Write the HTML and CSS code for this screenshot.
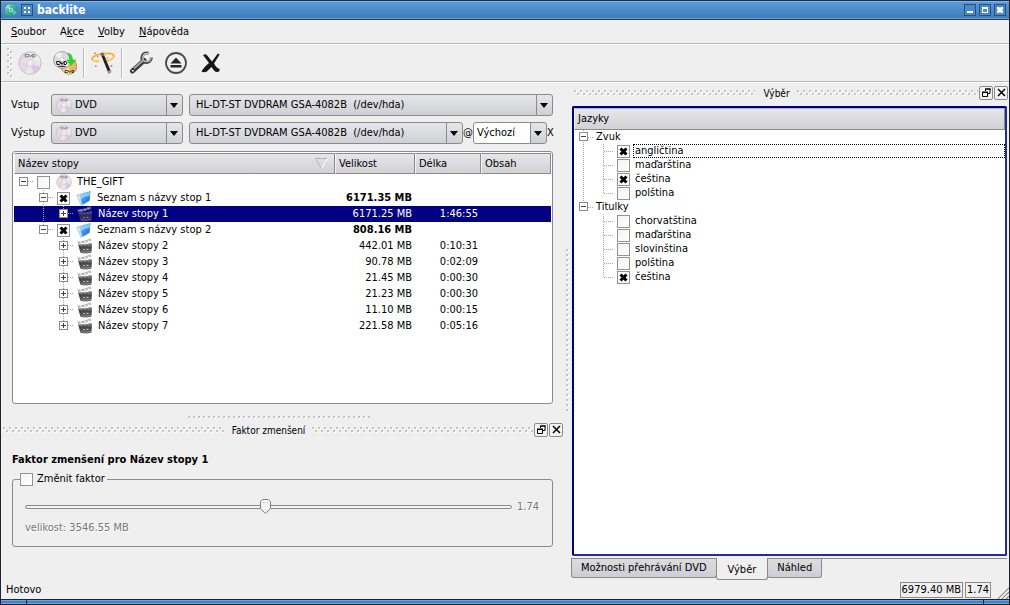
FILE: index.html
```html
<!DOCTYPE html>
<html lang="cs">
<head>
<meta charset="utf-8">
<title>backlite</title>
<link rel="stylesheet" href="styles.css">
</head>
<body>
<svg class="sprite" aria-hidden="true">
  <defs>
    <linearGradient id="g-disc" x1="0" y1="0" x2="1" y2="1">
      <stop offset="0" stop-color="#d2d2d6"/><stop offset=".35" stop-color="#e9e2ea"/>
      <stop offset=".5" stop-color="#ded6e2"/><stop offset=".7" stop-color="#ece6ee"/><stop offset="1" stop-color="#cfc6d4"/>
    </linearGradient>
    <linearGradient id="g-folder" x1="0" y1="0" x2="1" y2="1">
      <stop offset="0" stop-color="#9ed4ff"/><stop offset=".5" stop-color="#3f9bf0"/><stop offset="1" stop-color="#0f56c0"/>
    </linearGradient>
    <linearGradient id="g-clap" x1="0" y1="0" x2="0" y2="1">
      <stop offset="0" stop-color="#8a8a8a"/><stop offset=".4" stop-color="#444"/><stop offset="1" stop-color="#666"/>
    </linearGradient>
    <linearGradient id="g-app" x1="0" y1="0" x2="1" y2="1">
      <stop offset="0" stop-color="#7fd6c4"/><stop offset=".5" stop-color="#3fae9f"/><stop offset="1" stop-color="#1c8688"/>
    </linearGradient>
  </defs>
  <symbol id="i-disc" viewBox="0 0 24 24">
    <circle cx="12" cy="12" r="11.2" fill="url(#g-disc)" stroke="#bdb8c2" stroke-width=".8"/>
    <path d="M12 12 1.500 10A11 11 0 0 0 4 19Z" fill="#efcfe4" opacity=".6"/>
    <path d="M12 12 22 16A11 11 0 0 1 16 22Z" fill="#d0b8dd" opacity=".6"/>
    <path d="M12 12 22.500 9A11 11 0 0 0 19 4Z" fill="#fff" opacity=".45"/>
    <path d="M12 12 7 21.500A11 11 0 0 0 12 23Z" fill="#f3f0d0" opacity=".5"/>
    <circle cx="12" cy="12" r="3.400" fill="#f4f2f4" stroke="#c8c2ca" stroke-width=".7"/>
    <circle cx="12" cy="12" r="1.400" fill="#fff" stroke="#d5d0d5" stroke-width=".5"/>
    <path d="M7 3.500h3.200q1.800 1 0 2.500H7.500zM11 3.500l1.500 2.500 1.500-2.500M14.500 3.500h2q1.500 1 0 2.500h-2z" fill="none" stroke="#77747c" stroke-width=".9"/>
  </symbol>
  <symbol id="i-copy" viewBox="0 0 24 24">
    <circle cx="16" cy="15.500" r="7.800" fill="#e8b768" stroke="#8b6a33" stroke-width=".6"/>
    <path d="M16 15.500 9.500 19a8 8 0 0 0 8.500 4z" fill="#f4d498"/>
    <path d="M12 19.500h2.500q1.500 1 0 2H12zM15.500 19.500l1.200 2 1.200-2M19 19.500h1.500q1 1 0 2H19z" fill="none" stroke="#222" stroke-width=".8"/>
    <circle cx="9" cy="9" r="8.400" fill="#dcdcde" stroke="#777" stroke-width=".6"/>
    <path d="M9 9 2.500 4.500A8 8 0 0 1 7.500 1z" fill="#f2f2f2"/><path d="M9 9 16.800 11a8 8 0 0 1-5 5.800z" fill="#f0f0f0"/>
    <circle cx="9" cy="8.500" r="2" fill="#fff" stroke="#aaa" stroke-width=".5"/>
    <path d="M3.500 10.500h3q2 1.500 0 3H4zM7.500 10.500l1.500 3 2-3M11.500 10.500h1.500q2 1.500 0 3h-2z" fill="none" stroke="#111" stroke-width="1"/>
    <ellipse cx="9" cy="15.300" rx="4.500" ry=".6" fill="#222"/>
    <path d="M14.500 2q5 .5 5 7H23l-5 5.500L13.500 9h3q0-4-2-7z" fill="#24d824" stroke="#2fb53a" stroke-width=".4"/>
  </symbol>
  <symbol id="i-wand" viewBox="0 0 24 24">
    <path d="M8 10.500Q1.500 10 1 8 1 5 10 3.200 21.500 1 22.800 4.500 23.500 8 13 10.800" fill="none" stroke="#f6ab35" stroke-width="1.800"/>
    <path d="M2 9.200q3 1.800 8 1.500M14 10.500q8-2 8.500-5" fill="none" stroke="#ffe06a" stroke-width=".9"/>
    <path d="m9.500 2.500 2.500-1 8 19-2.500 2z" fill="#27211f"/>
    <path d="m9.500 2.500 2.500-1 1.300 3-2.500 1z" fill="#77706a"/>
    <path d="m16.700 20 1.300 3 2.500-2-.8-2z" fill="#999"/>
    <path d="M3 1.500h1.600v1.600H3zM19.500 14h1.800v1.800h-1.800zM4 14.500h1.500V16H4z" fill="#f46a3a"/>
    <path d="M6 5h1.500v1.500H6zM15.500 6H17v1.500h-1.500z" fill="#f09c3a"/>
  </symbol>
  <symbol id="i-wrench" viewBox="0 0 24 24" fill="none">
    <path d="M3.500 20 15 9.500" stroke="#3a3a3a" stroke-width="5" stroke-linecap="round"/>
    <path d="M19.500 2.200Q14 1.500 13 6q-.5 4.500 3 5.300 5.500.7 6.500-4.800" stroke="#4a4a4a" stroke-width="3"/>
    <path d="M19 2.500q-4.500-.2-5.200 3.700-.2 3.500 2.500 4.200 4.500.5 5.700-3.700" stroke="#c6c6c6" stroke-width="1.300"/>
    <path d="M5 17.500 14.500 9" stroke="#a8a8a8" stroke-width="1.800"/>
    <circle cx="3.800" cy="19.700" r="1.500" fill="#eee" stroke="#1a1a1a" stroke-width=".9"/>
  </symbol>
  <symbol id="i-eject" viewBox="0 0 24 24">
    <circle cx="12" cy="12" r="10" fill="#f0f0f0" stroke="#4a4a4a" stroke-width="1.800"/>
    <path d="m12 6.500 5.500 6H6.500z" fill="#262626"/><path d="M6.500 14h11v2.500h-11z" fill="#262626"/>
  </symbol>
  <symbol id="i-quit" viewBox="0 0 24 24">
    <path d="M4 4q3-1.500 4 .3l5 6.200L18.500 3q1.500-.8 2 .8L15 12.500q2.500 4.500 5.500 5.500 1 3.500-4 2.800-2-1.500-4-4.800-3 3-5 4.800-3 1-5-.3 2-4 7.500-8.500z" fill="#161616"/>
  </symbol>
  <symbol id="i-folder" viewBox="0 0 16 16">
    <path d="M.5 5 9 2.500l1-.8.8 1.500L13 11 5 15.500z" fill="#d8e6f3" stroke="#a9c2d8" stroke-width=".6"/>
    <path d="M2 5.500 14.500 1l-.8 9.500L5.200 15.500z" fill="url(#g-folder)"/>
    <path d="m3 6 11-4.200-.4 4.200Q8 6 4 10z" fill="#bfe4ff" opacity=".6"/>
    <path d="m2 5.500 3.200 10 1.300-.8L3.200 5z" fill="#fff" opacity=".7"/>
  </symbol>
  <symbol id="i-clap" viewBox="0 0 16 16">
    <path d="M.5 3.500Q6 3.500 13.500.3l.7 2.500Q7 5.500 1 6z" fill="#b4b4b4"/>
    <path d="m3 3.600 2 2M7 2.800l2 2M10.500 1.600l2 2" stroke="#eee" stroke-width="1.200"/>
    <path d="M1 6.500Q9 6.500 15 5l-.5 9.500Q9 16 3.500 15z" fill="url(#g-clap)"/>
    <path d="m3 6.400 2 2M6.500 6.200l2 2M10 5.900l2 2M13 5.400l1.500 1.500" stroke="#999" stroke-width="1"/>
    <path d="M6 11.500h2M9.500 11.300h2" stroke="#bbb" stroke-width="1.200"/>
    <path d="M4 14q5 .5 10-.8" stroke="#888" fill="none"/>
  </symbol>
  <symbol id="i-float" viewBox="0 0 9 9">
    <path d="M3.500 3V1H8v4.500H6" fill="none" stroke="#000" stroke-width="1"/><path d="M3 .5h6v1H3zM0 3.500h6v1.500H0z"/>
    <path d="M.5 4v4.500h5V4" fill="none" stroke="#000"/>
  </symbol>
  <symbol id="i-close" viewBox="0 0 9 9">
    <path d="m1 1 7 7M8 1 1 8" stroke="#000" stroke-width="1.500"/>
  </symbol>
</svg>

<div class="window">
  <header class="titlebar">
    <svg class="app-icon" viewBox="0 0 14 14" aria-hidden="true">
      <circle cx="7" cy="7" r="6.600" fill="url(#g-app)" stroke="#2b8f90" stroke-width=".5"/>
      <path d="M7 7 1.500 4.500A6 6 0 0 1 5 1.500z" fill="#b5eadd" opacity=".7"/><path d="m7 7 5.800 1.500A6 6 0 0 1 10 12.500z" fill="#86d8c4" opacity=".6"/>
      <circle cx="7" cy="7" r="2" fill="#c5f0e6"/><circle cx="7" cy="7" r=".9" fill="#2a8f94"/>
    </svg>
    <button class="title-button" aria-label="Na všech plochách"><svg viewBox="0 0 8 8"><path d="M1 1h2v2H1zM5 1h2v2H5zM1 5h2v2H1zM5 5h2v2H5z" fill="#fff"/></svg></button>
    <h1 class="title">backlite</h1>
    <button class="title-button" aria-label="Minimalizovat"><svg viewBox="0 0 8 8"><path d="M1 5h6v2H1z" fill="#fff"/></svg></button>
    <button class="title-button" aria-label="Maximalizovat"><svg viewBox="0 0 8 8"><path d="M1 1h6v6H1zM2 3v3h4V3z" fill="#fff" fill-rule="evenodd"/></svg></button>
    <button class="title-button" aria-label="Zavřít"><svg viewBox="0 0 8 8"><path d="M1 1h2l1 1 1-1h2v2L6 4l1 1v2H5L4 6 3 7H1V5l1-1-1-1z" fill="#fff"/></svg></button>
  </header>

  <nav class="menubar">
    <button><u>S</u>oubor</button><button>A<u>k</u>ce</button><button><u>V</u>olby</button><button><u>N</u>ápověda</button>
  </nav>

  <div class="toolbar">
    <span class="grip-vertical"></span>
    <button aria-label="Otevřít DVD"><svg><use href="#i-disc"/></svg></button>
    <button aria-label="Kopírovat DVD"><svg><use href="#i-copy"/></svg></button>
    <span class="separator"></span>
    <button aria-label="Průvodce"><svg><use href="#i-wand"/></svg></button>
    <span class="separator"></span>
    <button aria-label="Nastavení"><svg><use href="#i-wrench"/></svg></button>
    <button aria-label="Vysunout"><svg><use href="#i-eject"/></svg></button>
    <button aria-label="Ukončit"><svg><use href="#i-quit"/></svg></button>
  </div>

  <main class="body">
    <section class="left">
      <div class="central">
        <div class="devices">
          <label for="in-type">Vstup</label>
          <div class="combo"><select id="in-type" class="with-icon"><option>DVD</option></select><svg class="combo-icon"><use href="#i-disc"/></svg></div>
          <div class="combo-row">
            <div class="combo grow"><select aria-label="Vstupní zařízení"><option>HL-DT-ST DVDRAM GSA-4082B&nbsp; (/dev/hda)</option></select></div>
          </div>
          <label for="out-type">Výstup</label>
          <div class="combo"><select id="out-type" class="with-icon"><option>DVD</option></select><svg class="combo-icon"><use href="#i-disc"/></svg></div>
          <div class="combo-row">
            <div class="combo grow"><select aria-label="Výstupní zařízení"><option>HL-DT-ST DVDRAM GSA-4082B&nbsp; (/dev/hda)</option></select></div>
            <label class="affix" for="speed">@</label>
            <div class="combo speed"><select id="speed" class="editable"><option>Výchozí</option></select></div>
            <span class="affix small">X</span>
          </div>
        </div>

        <div class="tree-frame">
          <table class="tracks">
            <colgroup><col><col class="col-size"><col class="col-length"><col class="col-content"></colgroup>
            <thead><tr>
              <th><div class="sorted">Název stopy<svg viewBox="0 0 13 11"><path d="M.5.5h12" stroke="#b4b4b8"/><path d="m.5.500 6 10" stroke="#b4b4b8"/><path d="m6.500 10.500 6-10" stroke="#fff"/></svg></div></th>
              <th>Velikost</th><th>Délka</th><th>Obsah</th>
            </tr></thead>
            <tbody>
              <tr><td><div class="node"><span class="guide arm"><button class="toggle open" aria-label="Sbalit"></button></span><label><input type="checkbox"><svg class="item-icon"><use href="#i-disc"/></svg>THE_GIFT</label></div></td><td></td><td></td><td></td></tr>
              <tr><td><div class="node"><span class="guide"></span><span class="guide tee"><button class="toggle open" aria-label="Sbalit"></button></span><label><input type="checkbox" checked><svg class="item-icon"><use href="#i-folder"/></svg>Seznam s názvy stop 1</label></div></td><td class="strong">6171.35 MB</td><td></td><td></td></tr>
              <tr class="selected"><td><div class="node"><span class="guide"></span><span class="guide pass"></span><span class="guide corner"><button class="toggle" aria-label="Rozbalit"></button></span><span class="item"><svg class="item-icon"><use href="#i-clap"/></svg>Název stopy 1</span></div></td><td>6171.25 MB</td><td>1:46:55</td><td></td></tr>
              <tr><td><div class="node"><span class="guide"></span><span class="guide corner"><button class="toggle open" aria-label="Sbalit"></button></span><label><input type="checkbox" checked><svg class="item-icon"><use href="#i-folder"/></svg>Seznam s názvy stop 2</label></div></td><td class="strong">808.16 MB</td><td></td><td></td></tr>
              <tr><td><div class="node"><span class="guide"></span><span class="guide"></span><span class="guide tee"><button class="toggle" aria-label="Rozbalit"></button></span><span class="item"><svg class="item-icon"><use href="#i-clap"/></svg>Název stopy 2</span></div></td><td>442.01 MB</td><td>0:10:31</td><td></td></tr>
              <tr><td><div class="node"><span class="guide"></span><span class="guide"></span><span class="guide tee"><button class="toggle" aria-label="Rozbalit"></button></span><span class="item"><svg class="item-icon"><use href="#i-clap"/></svg>Název stopy 3</span></div></td><td>90.78 MB</td><td>0:02:09</td><td></td></tr>
              <tr><td><div class="node"><span class="guide"></span><span class="guide"></span><span class="guide tee"><button class="toggle" aria-label="Rozbalit"></button></span><span class="item"><svg class="item-icon"><use href="#i-clap"/></svg>Název stopy 4</span></div></td><td>21.45 MB</td><td>0:00:30</td><td></td></tr>
              <tr><td><div class="node"><span class="guide"></span><span class="guide"></span><span class="guide tee"><button class="toggle" aria-label="Rozbalit"></button></span><span class="item"><svg class="item-icon"><use href="#i-clap"/></svg>Název stopy 5</span></div></td><td>21.23 MB</td><td>0:00:30</td><td></td></tr>
              <tr><td><div class="node"><span class="guide"></span><span class="guide"></span><span class="guide tee"><button class="toggle" aria-label="Rozbalit"></button></span><span class="item"><svg class="item-icon"><use href="#i-clap"/></svg>Název stopy 6</span></div></td><td>11.10 MB</td><td>0:00:15</td><td></td></tr>
              <tr><td><div class="node"><span class="guide"></span><span class="guide"></span><span class="guide corner"><button class="toggle" aria-label="Rozbalit"></button></span><span class="item"><svg class="item-icon"><use href="#i-clap"/></svg>Název stopy 7</span></div></td><td>221.58 MB</td><td>0:05:16</td><td></td></tr>
            </tbody>
          </table>
        </div>
      </div>

      <div class="splitter-horizontal"></div>

      <section class="dock">
        <div class="dock-title">
          <span class="grip"></span><h2>Faktor zmenšení</h2><span class="grip"></span>
          <button aria-label="Uvolnit"><svg><use href="#i-float"/></svg></button><button aria-label="Zavřít"><svg><use href="#i-close"/></svg></button>
        </div>
        <div class="factor">
          <h3>Faktor zmenšení pro Název stopy 1</h3>
          <fieldset>
            <legend><label><input type="checkbox">Změnit faktor</label></legend>
            <div class="slider-row"><input type="range" min="0" max="1000" value="493" disabled aria-label="Faktor"><output>1.74</output></div>
            <p>velikost: 3546.55 MB</p>
          </fieldset>
        </div>
      </section>
    </section>

    <div class="splitter-vertical"></div>

    <section class="right">
      <div class="dock-title">
        <span class="grip"></span><h2>Výběr</h2><span class="grip"></span>
        <button aria-label="Uvolnit"><svg><use href="#i-float"/></svg></button><button aria-label="Zavřít"><svg><use href="#i-close"/></svg></button>
      </div>
      <div class="languages">
        <div class="list-head">Jazyky</div>
        <ul>
          <li class="node"><span class="guide tee"><button class="toggle open" aria-label="Sbalit"></button></span><span class="group">Zvuk</span></li>
          <li class="node"><span class="guide pass"></span><span class="guide tee"></span><label class="focused"><input type="checkbox" checked><span>angličtina</span></label></li>
          <li class="node"><span class="guide pass"></span><span class="guide tee"></span><label><input type="checkbox"><span>maďarština</span></label></li>
          <li class="node"><span class="guide pass"></span><span class="guide tee"></span><label><input type="checkbox" checked><span>čeština</span></label></li>
          <li class="node"><span class="guide pass"></span><span class="guide corner"></span><label><input type="checkbox"><span>polština</span></label></li>
          <li class="node"><span class="guide corner"><button class="toggle open" aria-label="Sbalit"></button></span><span class="group">Titulky</span></li>
          <li class="node"><span class="guide"></span><span class="guide tee"></span><label><input type="checkbox"><span>chorvatština</span></label></li>
          <li class="node"><span class="guide"></span><span class="guide tee"></span><label><input type="checkbox"><span>maďarština</span></label></li>
          <li class="node"><span class="guide"></span><span class="guide tee"></span><label><input type="checkbox"><span>slovinština</span></label></li>
          <li class="node"><span class="guide"></span><span class="guide tee"></span><label><input type="checkbox"><span>polština</span></label></li>
          <li class="node"><span class="guide"></span><span class="guide corner"></span><label><input type="checkbox" checked><span>čeština</span></label></li>
        </ul>
      </div>
      <div class="tabs" role="tablist">
        <button role="tab">Možnosti přehrávání DVD</button><button role="tab" class="active" aria-selected="true">Výběr</button><button role="tab">Náhled</button>
      </div>
    </section>
  </main>

  <footer class="statusbar">
    <span class="message">Hotovo</span>
    <span class="cell">6979.40 MB</span><span class="cell">1.74</span>
    <svg class="resize" viewBox="0 0 12 12" aria-hidden="true"><path d="m1 12 11-11M5 12l7-7M9 12l3-3" stroke="#8e8e8e" stroke-width="1.300"/><path d="m2.500 12 9.500-9.500M6.500 12 12 6.500" stroke="#fff"/></svg>
  </footer>
  <div class="window-edge"><span></span><span></span><span></span></div>
</div>
</body>
</html>
```
FILE: styles.css
```css
* { box-sizing: border-box; }

html, body { height: 100%; margin: 0; }

body, button, select, input {
  font-family: "DejaVu Sans Condensed", "DejaVu Sans", sans-serif;
  font-size: 11px;
  line-height: 14px;
  color: #000;
}

h1, h2, h3, p, ul, fieldset { margin: 0; padding: 0; }
button { margin: 0; padding: 0; border: 0; background: none; }
svg { display: block; flex: none; }
.sprite { position: absolute; width: 0; height: 0; }

.window {
  display: flex;
  flex-direction: column;
  height: 100vh;
  background: #efefef;
  border: solid #1c2230;
  border-width: 0 1px;
  overflow: hidden;
}

/* Title bar */
.titlebar {
  display: flex;
  align-items: center;
  gap: 3px;
  height: 20px;
  padding: 0 3px;
  border-top: 1px solid #1f2b40;
  border-bottom: 1px solid #27384f;
  box-shadow: inset 0 1px #83b8ea, inset 0 -1px #69a5de;
  background: linear-gradient(#5b9bdb, #3b7bb8);
}
.app-icon { width: 14px; height: 14px; }
.title-button {
  width: 12px;
  height: 12px;
  padding: 1px;
  border: 1px solid #29517c;
  background: #4b8bca;
}
.title-button svg { width: 8px; height: 8px; }
.title {
  flex: 1;
  padding-left: 1px;
  font-size: 12px;
  line-height: 16px;
  color: #fff;
}

/* Menu and tool bars */
.menubar {
  display: flex;
  height: 24px;
  padding: 1px 3px 0;
  border-bottom: 1px solid #b6b6b6;
}
.menubar button { padding: 0 7px; }
.toolbar {
  display: flex;
  align-items: center;
  gap: 3px;
  height: 38px;
  padding: 0 6px;
  border-top: 1px solid #fff;
  border-bottom: 1px solid #b6b6b6;
}
.toolbar button { display: grid; place-items: center; width: 32px; height: 32px; }
.toolbar button svg { width: 24px; height: 24px; }
.separator {
  width: 2px;
  height: 30px;
  margin: 0 -1px;
  border-left: 1px solid #b9b9b9;
  border-right: 1px solid #fff;
}

/* Dotted grips */
.grip, .grip-vertical, .splitter-horizontal, .splitter-vertical { background-repeat: repeat-x; }
.grip {
  flex: 1;
  height: 6px;
  background-image:
    linear-gradient(90deg, #c4c4c4 2px, transparent 2px),
    linear-gradient(90deg, transparent 3px, #c4c4c4 3px 5px, transparent 5px),
    linear-gradient(90deg, transparent 1px, #fff 1px 3px, transparent 3px),
    linear-gradient(90deg, #fff 0, transparent 0, transparent 4px, #fff 4px);
  background-size: 6px 2px;
  background-position: 0 0, 0 3px, 0 1px, 0 4px;
}
.grip-vertical {
  width: 6px;
  height: 30px;
  margin-right: -2px;
  background-repeat: repeat-y;
  background-image:
    linear-gradient(#c4c4c4 2px, transparent 2px),
    linear-gradient(transparent 3px, #c4c4c4 3px 5px, transparent 5px),
    linear-gradient(transparent 1px, #fff 1px 3px, transparent 3px),
    linear-gradient(transparent 4px, #fff 4px);
  background-size: 2px 6px;
  background-position: 0 0, 3px 0, 1px 0, 4px 0;
}
.splitter-horizontal {
  align-self: center;
  width: 184px;
  height: 3px;
  margin: 12px 6px 3px 0;
  background-image:
    linear-gradient(90deg, #c4c4c4 2px, transparent 2px),
    linear-gradient(90deg, transparent 1px, #fff 1px 3px, transparent 3px);
  background-size: 5px 2px;
  background-position: 0 0, 0 1px;
}
.splitter-vertical {
  align-self: center;
  justify-self: center;
  width: 3px;
  height: 162px;
  margin: 0 2px 6px 0;
  background-repeat: repeat-y;
  background-image:
    linear-gradient(#c4c4c4 2px, transparent 2px),
    linear-gradient(transparent 1px, #fff 1px 3px, transparent 3px);
  background-size: 2px 5px;
  background-position: 0 0, 1px 0;
}

/* Body */
.body {
  flex: 1;
  min-height: 0;
  display: grid;
  grid-template-columns: minmax(0, 563fr) 8px minmax(0, 435fr);
  padding: 2px 2px 0 0;
  border-top: 1px solid #fff;
}
.left, .right, .central { display: flex; flex-direction: column; min-height: 0; }
.central { flex: 1; padding: 9px 11px 0; }

.devices {
  display: grid;
  grid-template-columns: 33px 132px minmax(0, 1fr);
  gap: 6px;
  align-items: center;
  margin-bottom: 7px;
}
.devices label { margin-left: -1px; }
.devices .affix { margin-left: 0; }
.combo-row { display: flex; align-items: center; }
.grow { flex: 1; }
.combo { position: relative; }
.combo select {
  appearance: none;
  display: block;
  width: 100%;
  height: 22px;
  padding: 0 18px 0 6px;
  border: 1px solid #8b8b8b;
  border-radius: 3px;
  background:
    url("data:image/svg+xml,%3Csvg xmlns='http://www.w3.org/2000/svg' width='8' height='5'%3E%3Cpath d='M0 0h8L4 5z'/%3E%3C/svg%3E") no-repeat right 4px center,
    linear-gradient(#8b8b8b, #8b8b8b) no-repeat right 15px top / 1px 100%,
    linear-gradient(#e6e6ea, #cfd0d5);
}
.combo select.with-icon { padding-left: 23px; }
.combo select.editable {
  padding-left: 3px;
  background:
    url("data:image/svg+xml,%3Csvg xmlns='http://www.w3.org/2000/svg' width='8' height='5'%3E%3Cpath d='M0 0h8L4 5z'/%3E%3C/svg%3E") no-repeat right 4px center,
    linear-gradient(#8b8b8b, #8b8b8b) no-repeat right 15px top / 1px 100%,
    linear-gradient(#e6e6ea, #cfd0d5) no-repeat right top / 15px 100%,
    #fff;
}
.combo-icon { position: absolute; left: 5px; top: 3px; width: 16px; height: 16px; pointer-events: none; }
.speed { width: 74px; }
.affix { width: 10px; overflow: visible; }
.affix.small { width: 6px; }

/* Track table */
.tree-frame {
  flex: 1;
  min-height: 0;
  padding: 1px;
  border: 1px solid #8b8b8b;
  border-radius: 3px;
  background: #fff;
}
.tracks { width: 100%; table-layout: fixed; border-collapse: separate; border-spacing: 0; }
.col-size { width: 80px; }
.col-length { width: 66px; }
.col-content { width: 70px; }
.tracks th, .list-head {
  height: 22px;
  padding: 0 3px;
  border: 1px solid #8b8b8b;
  border-left-color: #f4f4f6;
  background: linear-gradient(#e6e6ea, #d2d2d6);
  font-weight: normal;
  text-align: left;
}
.tracks th { height: 21px; }
.sorted { display: flex; justify-content: space-between; align-items: center; }
.sorted svg { width: 13px; height: 11px; margin-right: 3px; fill: none; }
.tracks td { height: 16px; padding: 0 3px 0 0; text-align: right; white-space: nowrap; }
.tracks td:first-child { padding: 0; text-align: left; }
.strong { font-weight: bold; }
.selected td { background: #000080; color: #fff; }
.selected .item-icon { opacity: .6; }

.node { display: flex; height: 16px; }
.node label, .node .item { display: flex; align-items: center; padding-left: 3px; }
.item-icon { width: 16px; height: 16px; margin: 0 5px 0 6px; }
.item .item-icon { margin-left: 0; }

.guide {
  --dots-v: repeating-linear-gradient(#a6a6a6 0 1px, transparent 1px 2px);
  --dots-h: repeating-linear-gradient(90deg, #a6a6a6 0 1px, transparent 1px 2px);
  flex: none;
  width: 20px;
  background-repeat: no-repeat;
}
.guide.arm { background-image: var(--dots-h); background-size: 10px 1px; background-position: 10px 7px; }
.guide.pass { background-image: var(--dots-v); background-size: 1px 100%; background-position: 9px 0; }
.guide.tee { background-image: var(--dots-v), var(--dots-h); background-size: 1px 100%, 10px 1px; background-position: 9px 0, 10px 7px; }
.guide.corner { background-image: var(--dots-v), var(--dots-h); background-size: 1px 8px, 10px 1px; background-position: 9px 0, 10px 7px; }

.toggle {
  display: block;
  width: 9px;
  height: 9px;
  margin: 3px 5px;
  border: 1px solid #8b8b8b;
  background:
    linear-gradient(#444, #444) no-repeat center / 5px 1px,
    linear-gradient(#444, #444) no-repeat center / 1px 5px,
    #fff;
}
.toggle.open { background: linear-gradient(#444, #444) no-repeat center / 5px 1px, #fff; }

input[type="checkbox"] {
  appearance: none;
  flex: none;
  width: 13px;
  height: 13px;
  margin: 0;
  border: 1px solid #939393;
  background: linear-gradient(135deg, #f3f3f3, #fff);
}
input[type="checkbox"]:checked {
  background: url("data:image/svg+xml,%3Csvg xmlns='http://www.w3.org/2000/svg' width='9' height='9'%3E%3Cpath d='M1.500 1.500l6 6M7.500 1.500l-6 6' stroke='%23000' stroke-width='3'/%3E%3C/svg%3E") no-repeat center, #fff;
}

/* Docks */
.dock-title { display: flex; align-items: center; height: 15px; padding-left: 2px; }
.dock-title h2 { padding: 3px 7px 0 8px; font-size: 10px; line-height: 12px; font-weight: normal; }
.dock-title button {
  display: grid;
  place-items: center;
  width: 14px;
  height: 14px;
  margin-left: 1px;
  border: 1px solid #8b8b8b;
  border-radius: 2px;
  background: #f4f4f4;
}
.dock-title button svg { width: 9px; height: 9px; }
.dock .dock-title { margin-right: 1px; }

.factor { padding: 16px 11px 33px; }
.factor h3 { font-size: 11px; line-height: 14px; margin-bottom: 5px; }
fieldset { min-width: 0; padding: 13px 12px 9px; border: 1px solid #8b8b8b; border-radius: 3px; }
legend { margin-left: -5px; padding: 0 2px 0 0; }
legend label { display: flex; align-items: center; gap: 4px; }
fieldset p { padding: 6px 0 2px; color: #777; text-shadow: 1px 1px #fff; }
.slider-row { display: flex; align-items: center; gap: 5px; color: #777; text-shadow: 1px 1px #fff; }
.slider-row output { width: 23px; }
input[type="range"] { appearance: none; flex: 1; min-width: 0; height: 16px; margin: 0; background: none; }
input[type="range"]::-webkit-slider-runnable-track {
  height: 4px;
  border: 1px solid #8b8b8b;
  border-radius: 2px;
  background: #f4f4f4;
}
input[type="range"]::-webkit-slider-thumb {
  appearance: none;
  width: 11px;
  height: 15px;
  margin-top: -7px;
  background: url("data:image/svg+xml,%3Csvg xmlns='http://www.w3.org/2000/svg' width='11' height='15'%3E%3Cpath d='M2.500.5h6l2 2v7l-5 5-5-5v-7z' fill='%23f2f2f2' stroke='%23808080'/%3E%3Cpath d='M3 3.500h1.500M6.500 3.500H8' stroke='%23bbb'/%3E%3C/svg%3E") no-repeat;
}

/* Languages dock */
.right .dock-title { margin-bottom: 6px; margin-right: -1px; }
.languages { flex: 1; min-height: 0; border: 2px solid #000080; border-color: #000080 #2a2a94 #2a2a94 #000080; border-radius: 2px; background: #fff; }
.list-head { padding: 3px; border-top-color: #b0b0b4; }
.languages ul { list-style: none; }
.languages .node { height: 14px; }
.languages label { flex: 1; }
.languages label span { margin-left: 3px; padding-left: 1px; border: 1px dotted transparent; line-height: 12px; flex: 1; }
.languages label.focused span { border-color: #000; }
.languages .toggle { margin-top: 2px; }
.group { padding-left: 2px; }

.tabs { display: flex; align-items: flex-start; margin: 2px 0 0 -1px; height: 22px; border-top: 1px solid #8b8b8b; }
.tabs button {
  height: 19px;
  padding: 0 9px;
  border: 1px solid #8b8b8b;
  border-top: 0;
  border-radius: 0 0 3px 3px;
  background: linear-gradient(#dcdce0, #cdced3);
}
.tabs button.active { height: 22px; margin: -1px -1px 0; padding: 2px 11px 0; background: #efefef; }

/* Status bar */
.statusbar { display: flex; align-items: center; gap: 2px; height: 19px; padding-left: 5px; }
.message { flex: 1; }
.cell { padding: 0 1px; border: 1px solid #8b8b8b; }
.resize { width: 12px; height: 12px; margin-left: 4px; align-self: flex-end; }

.window-edge { display: flex; gap: 1px; height: 6px; padding: 1px 0; background: #1c2230; }
.window-edge span { width: 25px; background: #3f84c6; border-top: 1px solid #69a5de; border-bottom: 1px solid #69a5de; }
.window-edge span:nth-child(2) { flex: 1; }
```
